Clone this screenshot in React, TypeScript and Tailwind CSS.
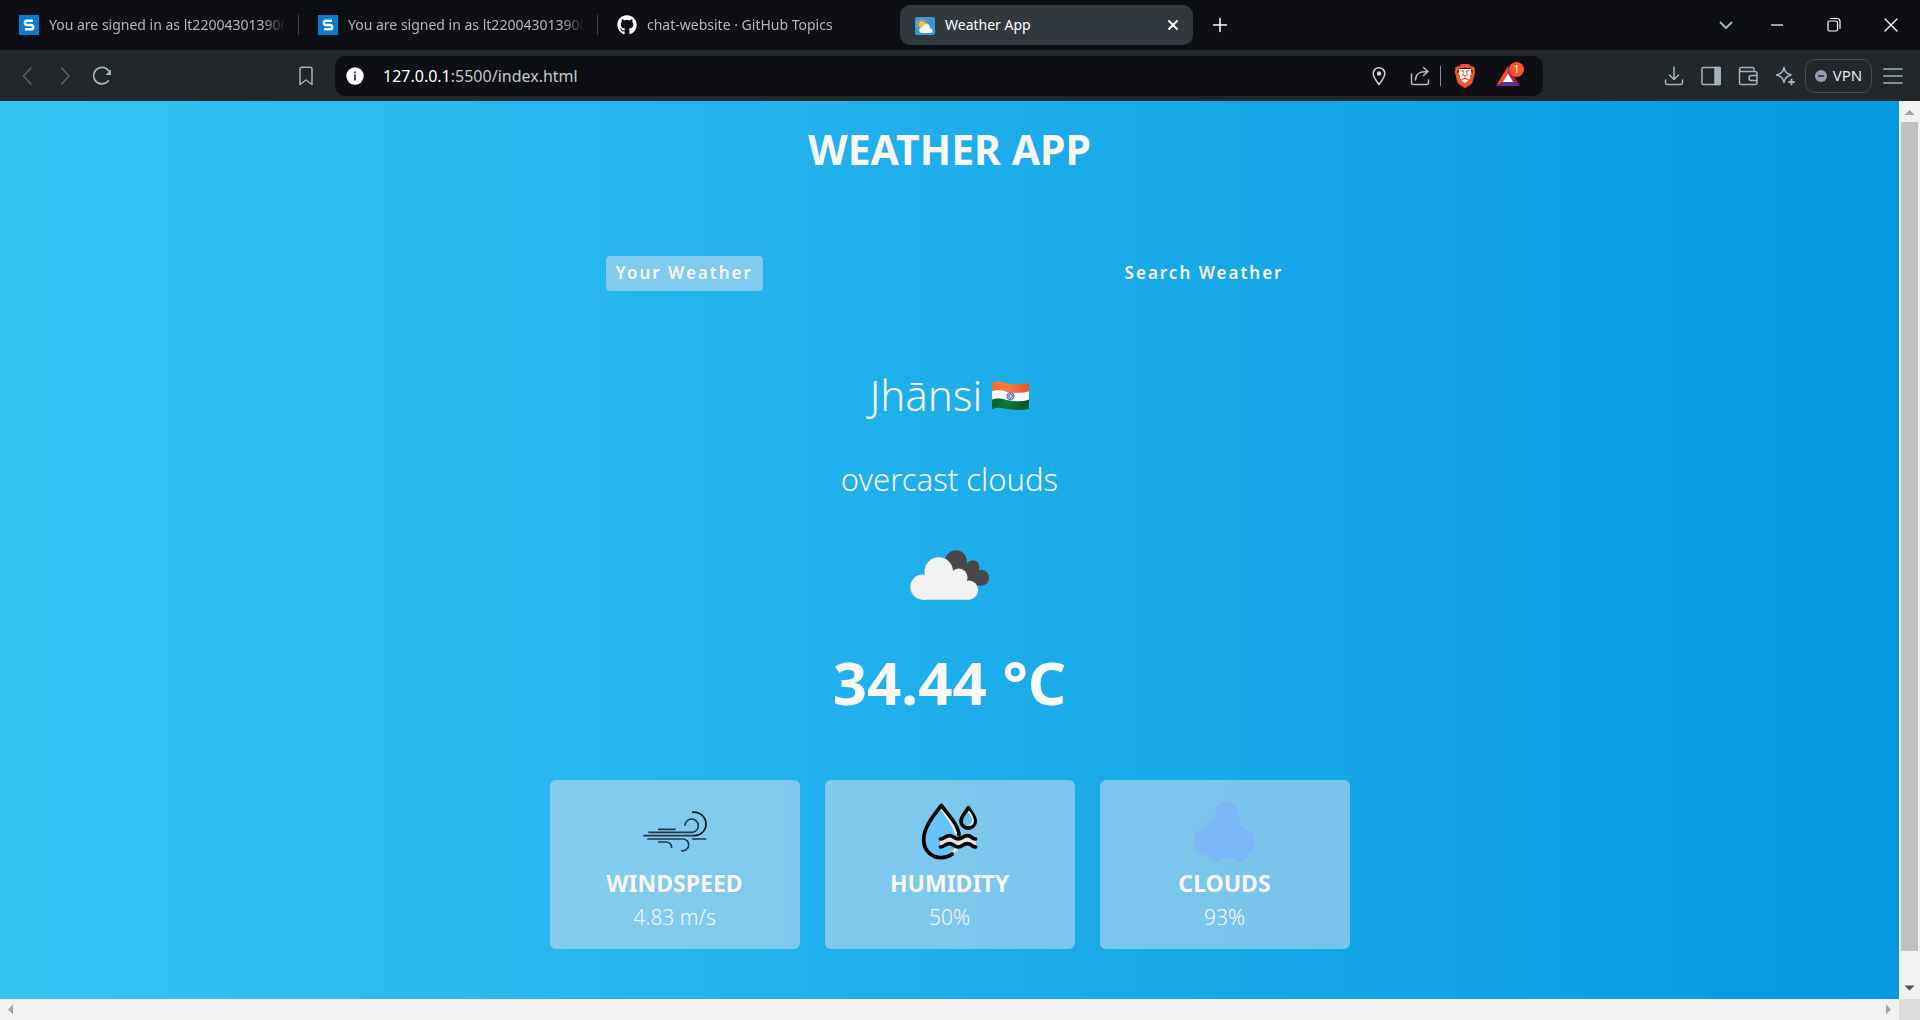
import type { ReactNode } from 'react';
import { FaGithub } from 'react-icons/fa';
import { SiBrave } from 'react-icons/si';

function PortalIcon() {
  return (
    <svg viewBox="0 0 20 20" className="size-5 shrink-0" aria-hidden="true">
      <rect width="20" height="20" fill="#0b7bcb" />
      <path d="M14 5.700H8a2.100 2.100 0 0 0 0 4.300h4a2.100 2.100 0 0 1 0 4.300H6" fill="none" stroke="#fff" strokeWidth="2.400" />
    </svg>
  );
}

function WeatherFavicon() {
  return (
    <svg viewBox="0 0 20 20" className="mt-1 size-5 shrink-0" aria-hidden="true">
      <rect width="20" height="18" rx="2" fill="#3a96d6" />
      <circle cx="7" cy="7.5" r="5" fill="none" stroke="#f2c230" strokeWidth="1.2" strokeDasharray="1 1.6" />
      <circle cx="7" cy="7.5" r="3.4" fill="#f8c51c" />
      <path d="M6.5 16a2.7 2.7 0 0 1-.2-5.300 2.200 2.200 0 0 1 2.200-2 3.300 3.300 0 0 1 6.300 1.300 3 3 0 0 1 .5 1.500 2.300 2.300 0 0 1 .7 4.500z" fill="#f4f6f8" />
    </svg>
  );
}

function Line({ children, className = 'size-5' }: { children: ReactNode; className?: string }) {
  return (
    <svg viewBox="0 0 20 20" className={className + ' shrink-0'} fill="none" stroke="currentColor" strokeWidth="1.5" strokeLinecap="round" strokeLinejoin="round" aria-hidden="true">
      {children}
    </svg>
  );
}

function BackgroundTab({ icon, title, last }: { icon: ReactNode; title: string; last?: boolean }) {
  return (
    <button role="tab" aria-selected="false" className="flex h-full w-[299px] items-center text-sm text-[#b4b6b9]">
      <span className="ml-[19px] mr-2.5 shrink-0">{icon}</span>
      <span className="flex-1 overflow-hidden whitespace-nowrap text-left [mask-image:linear-gradient(to_right,black_90%,transparent)]">{title}</span>
      <span className={last ? 'ml-3 w-px' : 'ml-3 h-5 w-px bg-[#43474c]'} />
    </button>
  );
}

function TabStrip() {
  return (
    <header className="flex h-[50px] items-center bg-[#0e0f14]">
      <div role="tablist" className="flex h-full items-center">
        <BackgroundTab icon={<PortalIcon />} title="You are signed in as lt2200430139001" />
        <BackgroundTab icon={<PortalIcon />} title="You are signed in as lt2200430139001" />
        <BackgroundTab icon={<FaGithub className="size-5 text-white" />} title="chat-website · GitHub Topics" last />
        <div className="ml-[3px] flex h-10 w-[293px] items-center rounded-[10px] bg-[#31393f] text-sm text-white">
          <button role="tab" aria-selected="true" className="flex flex-1 items-center gap-2.5 pl-[15px]">
            <WeatherFavicon />
            Weather App
          </button>
          <button aria-label="Close tab" className="mr-2.5">
            <Line><path d="M6 6l8 8m0-8l-8 8" strokeWidth="2" /></Line>
          </button>
        </div>
      </div>
      <button aria-label="New tab" className="ml-[17px] text-white">
        <Line><path d="M10 3.500v13M3.500 10h13" /></Line>
      </button>
      <div className="ml-auto flex items-center gap-[37px] pr-[19px] text-white">
        <button aria-label="Search tabs" className="mr-[-6px] text-[#a3b2bb]">
          <Line><path d="M4.500 7.500l5.500 5.500 5.500-5.500" strokeWidth="2" /></Line>
        </button>
        <button aria-label="Minimise"><Line><path d="M4 10h12" strokeWidth="1.2" strokeLinecap="butt" /></Line></button>
        <button aria-label="Restore">
          <Line><path d="M6.500 3.500h6.500a3 3 0 0 1 3 3v7" strokeWidth="1.200" /><rect x="4" y="6" width="9.500" height="10" rx="1.500" strokeWidth="1.200" /></Line>
        </button>
        <button aria-label="Close"><Line><path d="M4 4l12 12M16 4L4 16" strokeWidth="1.300" /></Line></button>
      </div>
    </header>
  );
}

function Toolbar() {
  return (
    <nav className="flex h-[51px] items-center bg-[#22272b] pl-[18px] pr-[17px] text-[#a3b2bb]">
      <button aria-label="Back" className="text-[#59636a]"><Line><path d="M13 2L5.500 10l7.500 8" /></Line></button>
      <button aria-label="Forward" className="ml-[17px] text-[#59636a]"><Line><path d="M6.500 2L14 10l-7.500 8" /></Line></button>
      <button aria-label="Reload" className="ml-[17px]">
        <Line><path d="M16.500 14.800A8.300 8.300 0 1 1 18.200 8.500" strokeWidth="1.700" /><path d="M19 3.500V9h-5.500z" fill="currentColor" stroke="none" /></Line>
      </button>
      <button aria-label="Bookmark this page" className="ml-[184px]"><Line><path d="M4 18.500V3A1.800 1.800 0 0 1 5.800 1.200h8.400A1.800 1.800 0 0 1 16 3v15.500l-6-4.500z" /></Line></button>
      <div className="ml-[19px] mr-[121px] flex h-10 flex-1 items-center rounded-[10px] bg-[#0e0f14] pl-[11px] pr-[23px]">
        <button aria-label="Site information">
          <svg viewBox="0 0 18 18" className="size-[18px]" aria-hidden="true">
            <circle cx="9" cy="9" r="8.700" fill="#fff" />
            <path d="M8.100 4.400h1.800v1.800H8.100zM8.100 7.500h1.800v6H8.100z" fill="#33383d" />
          </svg>
        </button>
        <div className="relative ml-[19px] flex-1 text-base leading-[22px]">
          <span aria-hidden="true" className="pointer-events-none absolute inset-0 text-[#c3c6c9]"><span className="text-white">127.0.0.1</span>:5500/index.html</span>
          <input aria-label="Address" defaultValue="127.0.0.1:5500/index.html" className="w-full bg-transparent text-transparent caret-white outline-none" />
        </div>
        <button aria-label="Location access" className="text-[#d0d2d4]">
          <Line><path d="M10 18.500C6.500 14 4.200 11 4.200 7.500a5.800 5.800 0 0 1 11.600 0C15.800 11 13.500 14 10 18.500z" /><circle cx="10" cy="7.500" r="1.500" fill="currentColor" /></Line>
        </button>
        <button aria-label="Share" className="ml-[21px] text-[#b7babd]">
          <Line><path d="M1.500 8v8.500a2 2 0 0 0 2 2h13a2 2 0 0 0 2-2V14M5.500 14C5.500 8 9 5.500 17.500 5.500M13.500 1.500l4.500 4-4.500 4" /></Line>
        </button>
        <span className="ml-2.5 h-5 w-px bg-[#8c9093]" />
        <button aria-label="Brave Shields" className="ml-3">
          <svg viewBox="0 0 24 24" className="size-6" aria-hidden="true">
            <path d="M6 5h12l1 9-7 8-7-8z" fill="#fff" />
            <SiBrave size={24} color="#fb542b" />
          </svg>
        </button>
        <button aria-label="Brave Rewards, 1 new" className="relative ml-[19px]">
          <svg viewBox="0 0 24 20" className="h-5 w-6" aria-hidden="true">
            <path d="M12 0L0 20l7-4 5-8z" fill="#ff4724" />
            <path d="M12 0l12 20-7-4-5-8z" fill="#9e1f63" />
            <path d="M0 20h24l-7-4H7z" fill="#662d91" />
            <path d="M12 7.500L17.200 16H6.800z" fill="#fff" />
          </svg>
          <span className="absolute -right-1 -top-1 flex size-[15px] items-center justify-center rounded-full bg-[#fb542b] text-[10px] leading-none text-white">1</span>
        </button>
      </div>
      <div className="flex items-center gap-[17px]">
        <button aria-label="Downloads"><Line><path d="M10 1v12M5.500 9l4.500 4.500L14.500 9M1.500 14v2.500a2 2 0 0 0 2 2h13a2 2 0 0 0 2-2V14" /></Line></button>
        <button aria-label="Sidebar"><Line><rect x="1" y="1.500" width="18" height="17" rx="1" /><path d="M14 1.500h5v17h-5z" fill="currentColor" /></Line></button>
        <button aria-label="Wallet"><Line><path d="M16 5V3a1.500 1.500 0 0 0-1.500-1.500h-11a2 2 0 0 0 0 4H17a2 2 0 0 1 2 2V16.500a2 2 0 0 1-2 2H3.500a2 2 0 0 1-2-2v-13M19 9.500h-5.500a2.500 2.500 0 0 0 0 5H19z" /></Line></button>
        <button aria-label="Leo AI"><Line><path d="M9 1.500c1 4.500 2.500 6 7 7.500-4.500 1.500-6 3-7 7.500C8 12 6.500 10.500 1.500 9 6.500 7.500 8 6 9 1.500z" /><path d="M16.500 13.500v5M14 16h5" strokeWidth="2" /></Line></button>
      </div>
      <button className="ml-2.5 flex h-[34px] w-[67px] items-center justify-center gap-1.5 rounded-[10px] border border-[#434c52] text-[15px] text-[#e6e8ea]">
        <svg viewBox="0 0 12 12" className="size-3" aria-hidden="true"><circle cx="6" cy="6" r="6" fill="#9a9ab2" /><path d="M3 6h6" stroke="#22272b" strokeWidth="1.600" /></svg>
        VPN
      </button>
      <button aria-label="Menu" className="ml-[11px]"><Line><path d="M.8 3h18.400M.8 10h18.400M.8 17h18.400" /></Line></button>
    </nav>
  );
}

function IndiaFlag() {
  const wave = (y: number) => `M0 ${y}C12 ${y - 5} 26 ${y - 5} 40 ${y}S90 ${y + 8} 112 ${y}`;
  return (
    <svg viewBox="0 0 112 88" className="h-[29px] w-[37px]" role="img" aria-label="India">
      <defs>
        <linearGradient id="saffron" x2="1"><stop stopColor="#f26b35" /><stop offset=".4" stopColor="#fb7b43" /><stop offset="1" stopColor="#f0521f" /></linearGradient>
        <linearGradient id="green" x2="1"><stop stopColor="#04602c" /><stop offset=".4" stopColor="#0b7a35" /><stop offset="1" stopColor="#055226" /></linearGradient>
      </defs>
      <path d={wave(5) + 'V31C90 39 66 35 40 31S12 26 0 32z'} fill="url(#saffron)" />
      <path d={wave(31) + 'V57C90 65 66 61 40 57S12 52 0 58z'} fill="#fafafa" />
      <path d={wave(57) + 'V84C90 91 66 88 40 84S12 79 0 86z'} fill="url(#green)" />
      <circle cx="56" cy="46" r="11" fill="#e3e3f1" stroke="#34348a" strokeWidth="2" />
      <circle cx="56" cy="46" r="6" fill="none" stroke="#34348a" strokeWidth="7" strokeDasharray="1.500 2" />
    </svg>
  );
}

function OvercastIcon() {
  return (
    <svg viewBox="333 59 240 151" className="h-[50px] w-20" role="img" aria-label="Overcast">
      <g fill="#48484a"><circle cx="471" cy="93" r="33" /><circle cx="522" cy="110" r="20" /><circle cx="547" cy="143" r="24" /><path d="M455 90l60 10 40 40-12 27-60-20z" /></g>
      <g fill="#f2f2f2"><circle cx="419" cy="124" r="43" /><circle cx="371" cy="171" r="38" /><circle cx="479" cy="142" r="27" /><circle cx="509" cy="180" r="29" /><path d="M371 140h110l30 40v29H371z" /></g>
    </svg>
  );
}

function WindIcon() {
  return (
    <svg viewBox="308 90 192 192" className="size-16" fill="none" stroke="#203b47" strokeWidth="5" aria-hidden="true">
      <path d="M353 178h53M324 187h131a20 20 0 1 0-21-20" />
      <path d="M321 207h107a17 17 0 0 1 17 17 18 18 0 0 1-22 18M455 207h43M353 216h23c12 0 18 8 18 18" />
      <path d="M309 197h153" />
      <path d="M460 197a35 35 0 0 0 37-35 36 36 0 0 0-42-35" stroke="#0b161b" />
    </svg>
  );
}

function HumidityIcon() {
  return (
    <svg viewBox="309 90 192 192" className="size-16" fill="none" stroke="#000" strokeWidth="11" strokeLinecap="round" strokeLinejoin="round" aria-hidden="true">
      <path d="M412 252c-10 7-21 11-33 11-30 0-53-23-53-53 0-40 32-75 53-104 21 29 53 60 53 91z" fill="#66c4fb" stroke="none" />
      <path d="M382 120c14 20 34 42 42 70M424 236l-10 12" stroke="#f1f1f1" strokeWidth="8" />
      <path d="M412 252c-10 7-21 11-33 11-30 0-53-23-53-53 0-40 32-75 53-104 21 29 51 58 53 89" />
      <path d="M460 113c-8 14-22 27-22 40a21 21 0 0 0 43 0c0-13-13-26-21-40z" fill="#66c4fb" />
      <path d="M462 125c7 9 12 18 12 28 0 6-3 10-8 12" stroke="#f1f1f1" strokeWidth="5" />
      <path d="M376 207c14 0 14-10 27-10s14 10 27 10 14-10 27-10 14 10 25 10v24c-11 0-12-10-25-10s-14 10-27 10-14-10-27-10-13 10-27 10z" fill="#e6e6e6" stroke="none" />
      <path d="M376 207c14 0 14-10 27-10s14 10 27 10 14-10 27-10 14 10 25 10M376 231c14 0 14-10 27-10s14 10 27 10 14-10 27-10 14 10 25 10" />
    </svg>
  );
}

function CloudsIcon() {
  return (
    <svg viewBox="310 90 190 190" className="size-16" aria-hidden="true">
      <path
        d="M370 146C374 110 390 91 409 91c23 0 41 27 44 73 9 1 17 9 20 18 15 0 24 13 24 33s-7 35-20 35c-7 18-17 27-29 27-11 0-20-7-25-17-8 10-23 10-31 5-4 8-10 12-16 12-10 0-18-14-20-27-6 6-13 7-19 7-17 0-26-17-26-44 0-25 14-45 36-43 1-15 8-30 23-24z"
        fill="#7ab8f9" stroke="#96c5e2" strokeWidth="2"
      />
    </svg>
  );
}

function Stat({ icon, label, value }: { icon: ReactNode; label: string; value: string }) {
  return (
    <article className="flex flex-1 flex-col items-center rounded-md bg-[#dbe2ef]/50 pb-[17px] pt-5">
      {icon}
      <h2 className="mt-1 text-[23px] font-bold uppercase leading-[30px]">{label}</h2>
      <p className="mt-1 text-[21px] font-[350] leading-[30px]">{value}</p>
    </article>
  );
}

function Arrow({ d, dark }: { d: string; dark?: boolean }) {
  return (
    <svg viewBox="0 0 21 21" className="size-[21px] shrink-0" aria-hidden="true">
      <path d={d} fill={dark ? '#505050' : '#a3a3a3'} />
    </svg>
  );
}

export default function App() {
  return (
    <div className="flex min-h-screen flex-col font-['Noto_Sans',sans-serif]">
      <TabStrip />
      <Toolbar />
      <div className="flex flex-1">
        <main className="flex flex-1 flex-col items-center bg-linear-to-r/srgb from-[#37c3f4] to-[#0599e1] pb-[50px] pt-6 text-[#f9f7f7]">
          <h1 className="text-[41px] font-bold uppercase leading-[48px]">Weather App</h1>
          <div role="tablist" className="mt-[83px] flex w-full max-w-[800px] justify-between px-14 text-[17px] font-semibold leading-[25px] tracking-[2px]">
            <button role="tab" aria-selected="true" className="rounded bg-[#dbe2ef]/50 px-2.5 pb-1.5 pt-1">Your Weather</button>
            <button role="tab" aria-selected="false" className="rounded px-2.5 pb-1.5 pt-1">Search Weather</button>
          </div>
          <div className="mt-[76px] flex items-center gap-2.5 text-[42px] font-[350] leading-[56px]">
            Jhānsi
            <IndiaFlag />
          </div>
          <p className="mt-9 text-[31px] font-[350] leading-10">overcast clouds</p>
          <div className="mt-[51px]"><OvercastIcon /></div>
          <p className="mt-[46px] text-[60px] font-bold leading-[72px]">34.44 °C</p>
          <section className="mt-[62px] flex w-full max-w-[800px] gap-[25px]">
            <Stat icon={<WindIcon />} label="Windspeed" value="4.83 m/s" />
            <Stat icon={<HumidityIcon />} label="Humidity" value="50%" />
            <Stat icon={<CloudsIcon />} label="Clouds" value="93%" />
          </section>
        </main>
        <div className="flex w-[21px] flex-col items-center bg-[#f1f1f1]">
          <Arrow d="M5.500 14l5-5 5 5z" />
          <div className="w-[17px] grow-[92] bg-[#c1c1c1]" />
          <div className="grow-[3]" />
          <Arrow d="M5.500 7.500h10l-5 5z" dark />
        </div>
      </div>
      <div className="flex h-[21px] bg-[#f1f1f1]">
        <Arrow d="M13 5.500v10l-5-5z" />
        <div className="flex-1" />
        <Arrow d="M8 5.500v10l5-5z" />
        <div className="w-[21px] bg-[#dcdcdc]" />
      </div>
    </div>
  );
}
